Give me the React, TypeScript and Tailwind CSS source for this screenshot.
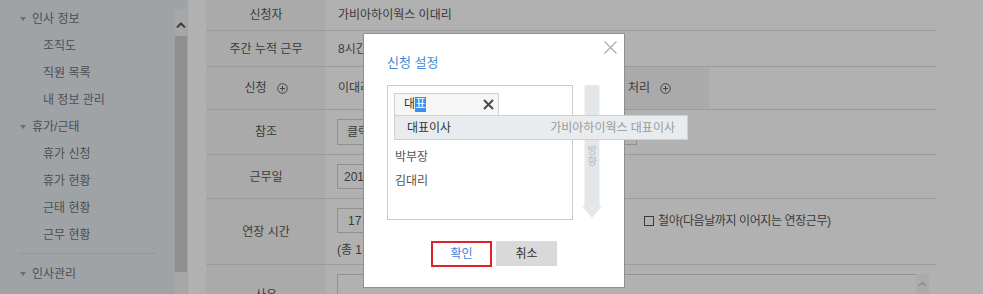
import React from "react";

function Tri() {
  return (
    <svg width="6" height="4" viewBox="0 0 6 4" className="shrink-0">
      <polygon points="0,0 6,0 3,4" fill="#6c6f72" />
    </svg>
  );
}

function PlusCircle() {
  return (
    <svg width="11" height="11" viewBox="0 0 11 11" className="shrink-0">
      <circle cx="5.5" cy="5.5" r="4.8" fill="none" stroke="#444" strokeWidth="1" />
      <path d="M5.5 3v5M3 5.5h5" stroke="#444" strokeWidth="1" />
    </svg>
  );
}

function Top({ label }: { label: string }) {
  return (
    <div className="h-[27px] flex items-center pl-[20px] gap-[6px] text-[#4c4f52]">
      <Tri />
      <span>{label}</span>
    </div>
  );
}

function Sub({ label }: { label: string }) {
  return <div className="h-[27px] flex items-center pl-[43px] text-[#4c4f52]">{label}</div>;
}

export default function App() {
  return (
    <div className="relative w-[983px] h-[294px] overflow-hidden flex text-[12px] leading-[16px] font-['Liberation_Sans','Noto_Sans_CJK_KR',sans-serif]">
      {/* Sidebar */}
      <div className="w-[188px] h-full bg-[#a0a3a6] flex shrink-0">
        <div className="w-[175px] pt-[5px] flex flex-col">
          <Top label="인사 정보" />
          <Sub label="조직도" />
          <Sub label="직원 목록" />
          <Sub label="내 정보 관리" />
          <Top label="휴가/근태" />
          <Sub label="휴가 신청" />
          <Sub label="휴가 현황" />
          <Sub label="근태 현황" />
          <Sub label="근무 현황" />
          <div className="mt-[5px] ml-[19px] w-[137px] h-px bg-[#94979a]" />
          <div className="mt-[6px]">
            <Top label="인사관리" />
          </div>
        </div>
        <div className="w-[12px] flex flex-col pt-[10px]">
          <div className="h-[26px] bg-[#a7a7a7] flex items-start justify-center pt-[12px]">
            <svg width="10" height="6" viewBox="0 0 10 6">
              <polyline points="1,5.5 5,1.5 9,5.5" fill="none" stroke="#3c3c3c" strokeWidth="2" />
            </svg>
          </div>
          <div className="h-[236px] bg-[#8f8f8f]" />
          <div className="flex-1 bg-[#a7a7a7]" />
        </div>
      </div>

      {/* Main */}
      <div className="flex-1 h-full bg-[#b1b1b1] pl-[18px] text-[#3a3a3a]">
        <div className="w-[731px] flex flex-col">
          {/* 신청자 */}
          <div className="flex h-[31px] border-b border-[#9b9b9b]">
            <div className="w-[120px] bg-[#aaaaaa] flex items-center justify-center">신청자</div>
            <div className="flex-1 flex items-center pl-[12px]">가비아하이웍스 이대리</div>
          </div>
          {/* 주간 누적 근무 */}
          <div className="flex h-[36px] border-b border-[#9b9b9b]">
            <div className="w-[120px] bg-[#aaaaaa] flex items-center justify-center">주간 누적 근무</div>
            <div className="flex-1 flex items-center pl-[12px]">8시간</div>
          </div>
          {/* 신청 */}
          <div className="flex h-[43px] border-b border-[#9b9b9b]">
            <div className="w-[120px] bg-[#aaaaaa] flex items-center justify-center gap-[10px]">
              <span>신청</span>
              <PlusCircle />
            </div>
            <div className="w-[264px] flex items-center pl-[12px]">이대리</div>
            <div className="w-[119px] bg-[#aaaaaa] flex items-center justify-center gap-[10px]">
              <span>처리</span>
              <PlusCircle />
            </div>
            <div className="flex-1" />
          </div>
          {/* 참조 */}
          <div className="flex h-[45px] border-b border-[#9b9b9b]">
            <div className="w-[120px] bg-[#aaaaaa] flex items-center justify-center">참조</div>
            <div className="flex-1 flex items-center pl-[11px]">
              <div className="w-[300px] h-[26px] border border-[#909090] flex items-center pl-[9px]">클릭</div>
            </div>
          </div>
          {/* 근무일 */}
          <div className="flex h-[44px] border-b border-[#9b9b9b]">
            <div className="w-[120px] bg-[#aaaaaa] flex items-center justify-center">근무일</div>
            <div className="flex-1 flex items-center pl-[11px]">
              <div className="w-[120px] h-[25px] border border-[#909090] flex items-center pl-[6px]">2019</div>
            </div>
          </div>
          {/* 연장 시간 */}
          <div className="flex h-[66px] border-b border-[#9b9b9b]">
            <div className="w-[120px] bg-[#aaaaaa] flex items-center justify-center">연장 시간</div>
            <div className="flex-1 flex items-start pl-[11px] pt-[9px]">
              <div className="w-[307px] flex flex-col">
                <div className="w-[60px] h-[25px] border border-[#909090] flex items-center pl-[10px]">17</div>
                <div className="mt-[9px]">(총 1시간)</div>
              </div>
              <div className="h-[25px] flex items-center gap-[4px]">
                <div className="w-[10px] h-[10px] border border-[#3a3a3a]" />
                <span className="tracking-[-0.4px]">철야(다음날까지 이어지는 연장근무)</span>
              </div>
            </div>
          </div>
          {/* 사유 */}
          <div className="flex h-[60px]">
            <div className="w-[120px] bg-[#aaaaaa] flex items-start justify-center pt-[22px]">사유</div>
            <div className="flex-1 flex items-start pl-[11px] pt-[9px]">
              <div className="w-[579px] h-[40px] border-t border-l border-[#909090]" />
              <div className="w-[13px] h-[40px] bg-[#ababab] flex justify-center pt-[7px]">
                <svg width="9" height="6" viewBox="0 0 9 6">
                  <polyline points="1,5 4.5,1.5 8,5" fill="none" stroke="#8a8a8a" strokeWidth="1.6" />
                </svg>
              </div>
            </div>
          </div>
        </div>
      </div>

      {/* Modal */}
      <div className="absolute left-[363px] top-[33px] w-[262px] h-[255px] bg-white border border-[#8f8f8f] text-[#555]">
        <svg className="absolute right-[7px] top-[7px]" width="13" height="13" viewBox="0 0 13 13">
          <path d="M0.5 0.5L12.5 12.5M12.5 0.5L0.5 12.5" stroke="#a8a8a8" strokeWidth="1.1" />
        </svg>
        <div className="pl-[23px] pt-[20px] text-[13px] leading-[18px] text-[#3f8bd9]">신청 설정</div>
        <div className="flex pl-[23px] mt-[13px]">
          <div className="relative w-[186px] h-[135px] border border-[#cccccc] px-[6px] pt-[7px]">
            <div className="h-[23px] w-[105px] border border-[#cfcfcf] bg-[#f6f6f6] flex items-center pl-[9px] pr-[4px]">
              <span className="text-[#333] leading-[15px]">대</span>
              <span className="bg-[#3a8ff0] text-white leading-[15px]">표</span>
              <svg className="ml-auto" width="11" height="11" viewBox="0 0 11 11">
                <path d="M1 1L10 10M10 1L1 10" stroke="#4a4a4a" strokeWidth="2" />
              </svg>
            </div>
            <div className="mt-[5px] flex flex-col pl-[1px] text-[#555]">
              <div className="h-[24px]" />
              <div className="h-[24px] flex items-center">박부장</div>
              <div className="h-[24px] flex items-center">김대리</div>
            </div>
            <div className="absolute left-[6px] top-[29px] w-[294px] h-[25px] bg-[#e9ecef] border border-[#cdd1d5] flex items-center justify-between pl-[12px] pr-[12px] z-10">
              <span className="text-[#333]">대표이사</span>
              <span className="text-[#9b9b9b]">가비아하이웍스 대표이사</span>
            </div>
          </div>
          <div className="relative ml-[9px] w-[20px] h-[134px]">
            <svg className="absolute left-0 top-0" width="20" height="134" viewBox="0 0 20 134">
              <rect x="2.5" y="0" width="15" height="122" fill="#e4e7ea" />
              <polygon points="0,121 20,121 10,133" fill="#e4e7ea" />
            </svg>
            <div className="absolute left-0 top-[60px] w-[20px] flex flex-col items-center text-[10px] leading-[11px] text-[#b7bdc3]">
              <span>방</span>
              <span>향</span>
            </div>
          </div>
        </div>
        <div className="flex justify-center items-start gap-[4px] mt-[21px]">
          <div className="w-[61px] h-[26px] border-2 border-[#e3212b] bg-white flex items-center justify-center text-[#3f7fd6]">
            확인
          </div>
          <div className="w-[61px] h-[25px] bg-[#d9d9d9] flex items-center justify-center text-[#333]">취소</div>
        </div>
      </div>
    </div>
  );
}
